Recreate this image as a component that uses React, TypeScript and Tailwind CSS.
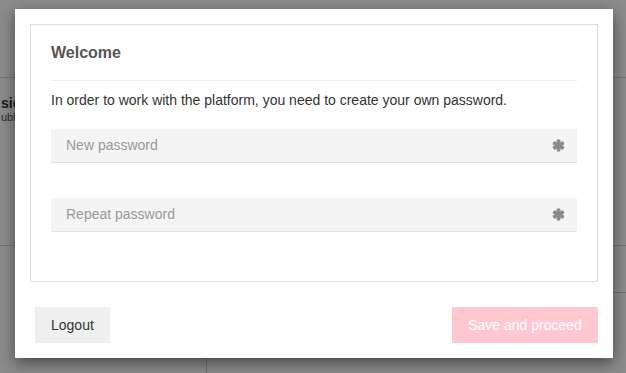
import React from 'react';

const Asterisk: React.FC = () => (
  <svg viewBox="0 0 12 12" className="h-[13px] w-[13px] shrink-0 text-[#8a8a8a]" fill="currentColor">
    <rect x="4.3" y="0.5" width="3.4" height="11" rx="0.6" />
    <rect x="4.3" y="0.5" width="3.4" height="11" rx="0.6" transform="rotate(60 6 6)" />
    <rect x="4.3" y="0.5" width="3.4" height="11" rx="0.6" transform="rotate(-60 6 6)" />
  </svg>
);

const PasswordField: React.FC<{ placeholder: string }> = ({ placeholder }) => (
  <div className="flex h-[34px] items-center justify-between border-b border-[#e2e2e2] bg-[#f4f4f4] pl-[15px] pr-[12px]">
    <input
      type="password"
      placeholder={placeholder}
      className="w-full bg-transparent text-[14px] text-[#333] outline-none placeholder:text-[#999]"
    />
    <Asterisk />
  </div>
);

const App: React.FC = () => {
  return (
    <div className="relative h-[373px] w-[626px] overflow-hidden bg-white font-['Liberation_Sans',Arial,sans-serif]">
      {/* page behind the dialog */}
      <div className="flex h-full flex-col">
        <div className="h-[78px] border-b border-[#d8d8d8]" />
        <div className="flex h-[168px] flex-col border-b border-[#d0d0d0] pt-[17px]">
          <span className="pl-px text-[14px] font-bold leading-4 text-[#333]">sion</span>
          <span className="pl-px text-[11px] leading-3 text-[#555]">ubl</span>
        </div>
        <div className="flex flex-1">
          <div className="w-[207px] border-r border-[#d0d0d0]" />
          <div className="flex-1">
            <div className="h-[47px] border-b border-[#d0d0d0]" />
          </div>
        </div>
      </div>

      <div className="absolute inset-0 bg-black/45" />

      {/* dialog */}
      <div className="absolute left-[15px] top-[9px] flex h-[349px] w-[598px] flex-col bg-white shadow-[0_5px_15px_rgba(0,0,0,0.5)]">
        <div className="mx-[15px] mt-[15px] flex h-[258px] flex-col border border-[#dddddd] px-[20px] pt-[17px]">
          <h2 className="pb-[16px] text-[16px] font-bold leading-[22px] text-[#555]">Welcome</h2>
          <div className="border-t border-[#ebebeb]" />
          <p className="mt-[9px] text-[14px] leading-5 text-[#333]">
            In order to work with the platform, you need to create your own password.
          </p>
          <div className="mt-[19px] flex flex-col gap-[35px]">
            <PasswordField placeholder="New password" />
            <PasswordField placeholder="Repeat password" />
          </div>
        </div>
        <div className="mt-[25px] flex items-center justify-between pl-[20px] pr-[15px]">
          <button className="h-9 bg-[#efefef] px-4 text-[14px] text-[#333]">Logout</button>
          <button className="h-9 w-[146px] bg-[#ffc8d1] text-[14px] text-white">Save and proceed</button>
        </div>
      </div>
    </div>
  );
};

export default App;
